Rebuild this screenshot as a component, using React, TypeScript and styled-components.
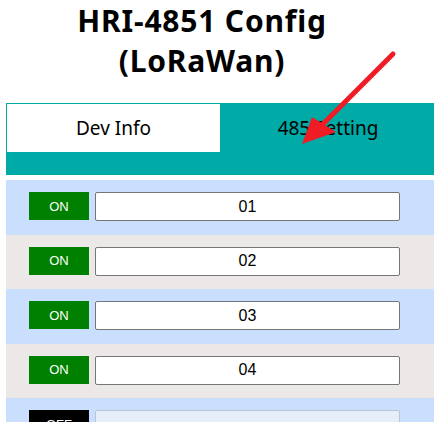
import React from "react";
import styled, { createGlobalStyle } from "styled-components";

const GlobalStyle = createGlobalStyle`
  html, body {
    margin: 0;
    padding: 0;
    background: #ffffff;
    overflow: hidden;
  }
  body {
    font-family: "Noto Sans", "Liberation Sans", sans-serif;
  }
`;

const Page = styled.div`
  position: relative;
  width: 434px;
  height: 422px;
  overflow: hidden;
`;

const Content = styled.div`
  margin-left: 6px;
  width: 430px;
`;

const Title = styled.h1`
  margin: 0;
  padding: 1px 38px 0 0;
  font-family: "Noto Sans", sans-serif;
  font-weight: 700;
  font-size: 30px;
  letter-spacing: 0.8px;
  line-height: 40px;
  text-align: center;
  color: #000000;
`;

const Tabs = styled.div`
  margin-top: 22px;
  display: grid;
  grid-template-columns: 213px 216px;
  background: #00aaa6;
  border-top: 1px solid #00aaa6;
  border-left: 1px solid #00aaa6;
  padding-bottom: 23px;
`;

const Tab = styled.div<{ $active?: boolean }>`
  height: 48px;
  display: flex;
  align-items: center;
  justify-content: center;
  font-family: "Noto Sans", sans-serif;
  font-size: 19px;
  color: #000000;
  background: ${(p) => (p.$active ? "#ffffff" : "transparent")};
`;

const List = styled.div`
  margin-top: 5px;
  display: flex;
  flex-direction: column;
`;

const Row = styled.div<{ $alt?: boolean }>`
  display: flex;
  align-items: flex-start;
  padding: 12px 0 12.5px 23px;
  height: 30px;
  background: ${(p) => (p.$alt ? "#ece8e7" : "#cadffd")};
`;

const Toggle = styled.div<{ $on: boolean }>`
  width: 60px;
  height: 28px;
  display: flex;
  align-items: center;
  justify-content: center;
  background: ${(p) => (p.$on ? "#008000" : "#000000")};
  color: #ffffff;
  font-family: "Liberation Sans", Arial, sans-serif;
  font-size: 13px;
`;

const NameField = styled.div<{ $disabled?: boolean }>`
  margin-left: 6px;
  width: 305px;
  height: 29px;
  box-sizing: border-box;
  border: 1px solid ${(p) => (p.$disabled ? "#b9c4d4" : "#767676")};
  border-radius: 2px;
  background: ${(p) => (p.$disabled ? "#e6eef9" : "#ffffff")};
  display: flex;
  align-items: center;
  justify-content: center;
  font-family: "Liberation Sans", Arial, sans-serif;
  font-size: 16px;
  color: #000000;
`;

const Overlay = styled.svg`
  position: absolute;
  left: 0;
  top: 0;
  pointer-events: none;
`;

const channels = [
  { on: true, name: "01" },
  { on: true, name: "02" },
  { on: true, name: "03" },
  { on: true, name: "04" },
  { on: false, name: "" },
];

export default function App() {
  return (
    <Page>
      <GlobalStyle />
      <Content>
        <Title>
          HRI-4851 Config
          <br />
          (LoRaWan)
        </Title>
        <Tabs>
          <Tab $active>Dev Info</Tab>
          <Tab>485 Setting</Tab>
        </Tabs>
        <List>
          {channels.map((c, i) => (
            <Row key={i} $alt={i % 2 === 1}>
              <Toggle $on={c.on}>{c.on ? "ON" : "OFF"}</Toggle>
              <NameField $disabled={!c.on}>{c.name}</NameField>
            </Row>
          ))}
        </List>
      </Content>
      <Overlay width="434" height="422" viewBox="0 0 434 422">
        <line
          x1="393"
          y1="54"
          x2="318"
          y2="129"
          stroke="#ee1c25"
          strokeWidth="5"
          strokeLinecap="round"
        />
        <polygon points="302,144 312,117 336,132" fill="#ee1c25" />
      </Overlay>
    </Page>
  );
}
